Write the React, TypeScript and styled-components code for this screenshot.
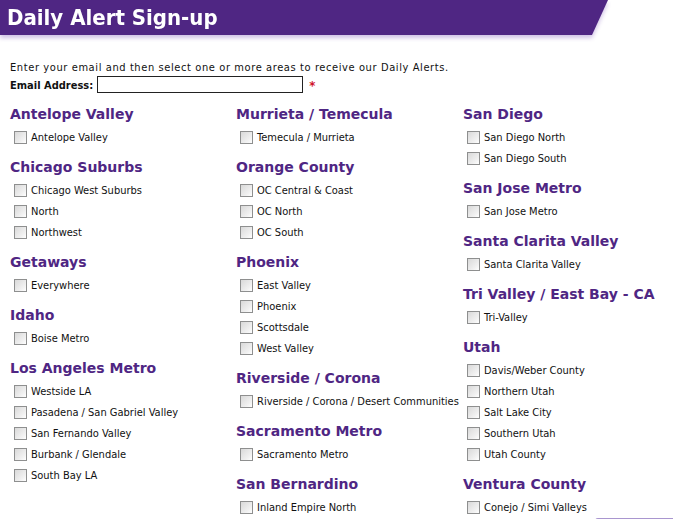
import React from "react";
import styled, { createGlobalStyle } from "styled-components";

const Global = createGlobalStyle`
  html, body { margin: 0; padding: 0; background: #ffffff; }
  body { font-family: "DejaVu Sans Condensed", "DejaVu Sans", sans-serif; font-size: 11px; color: #111; overflow: hidden; }
`;

const PURPLE = "#4f2683";

const Page = styled.div`
  width: 673px;
  height: 519px;
  overflow: hidden;
`;

const HeaderWrap = styled.div`
  width: 608px;
  filter: drop-shadow(0 3px 2px rgba(150, 120, 200, 0.45));
`;

const HeaderBar = styled.h1`
  margin: 0;
  height: 35px;
  background: ${PURPLE};
  clip-path: polygon(0 0, 100% 0, calc(100% - 16px) 100%, 0 100%);
  color: #fff;
  font-family: "DejaVu Sans Condensed", "DejaVu Sans", sans-serif;
  font-weight: bold;
  font-size: 22px;
  line-height: 35px;
  padding-left: 7px;
`;

const Body = styled.div`
  padding: 25px 0 0 10px;
`;

const Intro = styled.p`
  margin: 0;
  line-height: 16px;
  letter-spacing: 0.6px;
`;

const EmailRow = styled.div`
  display: flex;
  align-items: center;
  height: 19px;
`;

const EmailLabel = styled.label`
  font-weight: bold;
  margin-right: 4px;
`;

const EmailInput = styled.input`
  width: 202px;
  height: 13px;
  border: 1px solid #222;
  padding: 1px;
  margin: 0 0 2px 0;
  box-sizing: content-box;
`;

const Required = styled.span`
  color: #d0112b;
  font-weight: bold;
  font-size: 13px;
  margin-left: 6px;
`;

const Columns = styled.div`
  display: grid;
  grid-template-columns: 226px 227px 1fr;
`;

const Column = styled.div`
  display: flex;
  flex-direction: column;
`;

const Group = styled.div`
  padding-top: 9px;
`;

const Heading = styled.h2`
  margin: 0 0 2px 0;
  height: 21px;
  line-height: 21px;
  color: ${PURPLE};
  font-family: "DejaVu Sans", Verdana, sans-serif;
  font-weight: bold;
  font-size: 14px;
  white-space: nowrap;
`;

const Item = styled.label`
  display: flex;
  align-items: center;
  height: 21px;
  padding-left: 4px;
  white-space: nowrap;
`;

const Box = styled.span`
  width: 11px;
  height: 11px;
  border: 1px solid #8e8f8f;
  background: linear-gradient(135deg, #d9d9d9 0%, #f1f1f1 70%, #ffffff 100%);
  margin-right: 4px;
  flex: none;
`;

const Footer = styled.div`
  display: flex;
  justify-content: flex-end;
`;

const SubmitEdge = styled.div`
  width: 78px;
  height: 20px;
  border-top: 2px solid #a996cf;
  border-radius: 3px 0 0 0;
  background: #f7f4fb;
`;

type Section = { title: string; items: string[] };

const columns: Section[][] = [
  [
    { title: "Antelope Valley", items: ["Antelope Valley"] },
    { title: "Chicago Suburbs", items: ["Chicago West Suburbs", "North", "Northwest"] },
    { title: "Getaways", items: ["Everywhere"] },
    { title: "Idaho", items: ["Boise Metro"] },
    {
      title: "Los Angeles Metro",
      items: ["Westside LA", "Pasadena / San Gabriel Valley", "San Fernando Valley", "Burbank / Glendale", "South Bay LA"],
    },
  ],
  [
    { title: "Murrieta / Temecula", items: ["Temecula / Murrieta"] },
    { title: "Orange County", items: ["OC Central & Coast", "OC North", "OC South"] },
    { title: "Phoenix", items: ["East Valley", "Phoenix", "Scottsdale", "West Valley"] },
    { title: "Riverside / Corona", items: ["Riverside / Corona / Desert Communities"] },
    { title: "Sacramento Metro", items: ["Sacramento Metro"] },
    { title: "San Bernardino", items: ["Inland Empire North"] },
  ],
  [
    { title: "San Diego", items: ["San Diego North", "San Diego South"] },
    { title: "San Jose Metro", items: ["San Jose Metro"] },
    { title: "Santa Clarita Valley", items: ["Santa Clarita Valley"] },
    { title: "Tri Valley / East Bay - CA", items: ["Tri-Valley"] },
    { title: "Utah", items: ["Davis/Weber County", "Northern Utah", "Salt Lake City", "Southern Utah", "Utah County"] },
    { title: "Ventura County", items: ["Conejo / Simi Valleys"] },
  ],
];

export default function App() {
  return (
    <Page>
      <Global />
      <HeaderWrap>
        <HeaderBar>Daily Alert Sign-up</HeaderBar>
      </HeaderWrap>
      <Body>
        <Intro>Enter your email and then select one or more areas to receive our Daily Alerts.</Intro>
        <EmailRow>
          <EmailLabel htmlFor="email">Email Address:</EmailLabel>
          <EmailInput id="email" type="text" />
          <Required>*</Required>
        </EmailRow>
        <Columns>
          {columns.map((col, ci) => (
            <Column key={ci}>
              {col.map((s) => (
                <Group key={s.title}>
                  <Heading>{s.title}</Heading>
                  {s.items.map((it) => (
                    <Item key={it}>
                      <Box />
                      {it}
                    </Item>
                  ))}
                </Group>
              ))}
            </Column>
          ))}
        </Columns>
        <Footer>
          <SubmitEdge />
        </Footer>
      </Body>
    </Page>
  );
}
